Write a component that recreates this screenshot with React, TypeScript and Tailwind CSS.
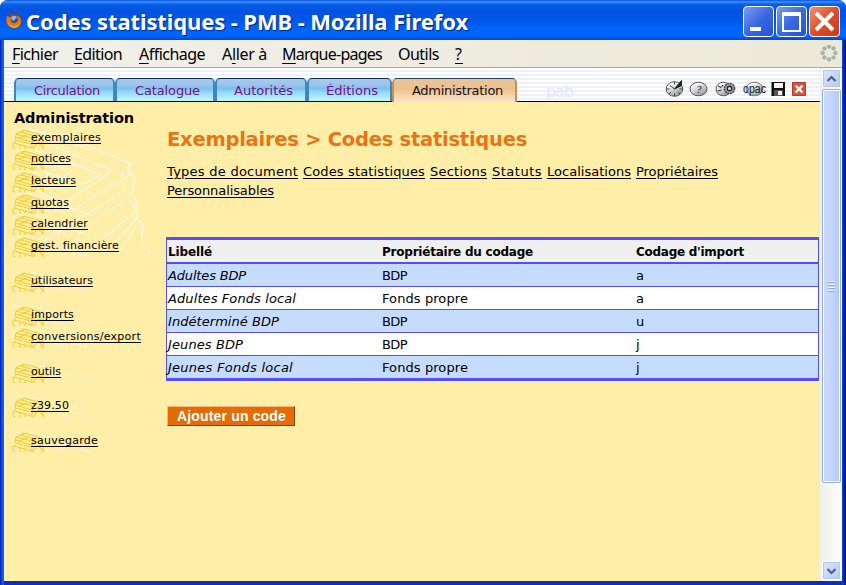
import { useLayoutEffect, useRef, useState } from "react";
import type { ReactNode } from "react";

/** A label whose letters are spaced so that it fills `w` pixels. */
function Label({ w, children, className = "" }: { w: number; children: ReactNode; className?: string }) {
  const ref = useRef<HTMLSpanElement>(null);
  const [spacing, setSpacing] = useState(0);
  useLayoutEffect(() => {
    const el = ref.current;
    if (!el) return;
    el.style.letterSpacing = "0px";
    const n = (el.textContent ?? "").length;
    const s = (w - el.getBoundingClientRect().width) / n;
    el.style.letterSpacing = `${s}px`;
    setSpacing(s);
  }, [w]);
  return (
    <span ref={ref} className={`inline-block whitespace-pre ${className}`} style={{ letterSpacing: `${spacing}px` }}>
      {children}
    </span>
  );
}

const verdana = "font-['DejaVu_Sans',sans-serif]";

function FirefoxIcon() {
  return (
    <svg width="16" height="16" viewBox="0 0 16 16" className="mt-[1px]">
      <circle cx="8" cy="8" r="7.5" fill="#a33b08" />
      <circle cx="8.3" cy="6.7" r="5.2" fill="#2c4f98" />
      <path d="M5 4l2-1.5 3 .5 1 2-2 1-1 2-2-1z" fill="#8fb4d8" />
      <path d="M1 3c1 1 2 .8 3 1.2 1 .2 1.800.5 2 1.300L4.800 7c0 2 1.500 3 3.200 3 2.500 0 4.200-1.500 4-4.500l-1.500-3C14 3.500 15.500 6.500 15 9.500 14 13.500 11 15 8 15 4 15 .500 12 .500 8 .500 6 .500 4.500 1 3z" fill="#e07818" />
      <path d="M2 7c0 4 2 6 6 6.500 3 0 5-1.500 6-4.500-1 5-4 6-6.500 5.500C4 14 1.500 11 2 7z" fill="#ffc43a" />
    </svg>
  );
}

function WinButton({ kind }: { kind: "min" | "max" | "close" }) {
  const close = kind === "close";
  return (
    <div
      className={`h-[31px] w-[31px] rounded-[4px] border border-white bg-gradient-to-br ${
        close ? "from-[#f09070] via-[#df4d29] to-[#c93a12]" : "from-[#7b9df0] via-[#3a68e2] to-[#2453d4]"
      }`}
    >
      <svg width="29" height="29" viewBox="0 0 29 29" fill="none" stroke="#fff">
        {kind === "min" && <path d="M6 22h11" strokeWidth="4" />}
        {kind === "max" && (
          <>
            <path d="M5 7h19" strokeWidth="4" />
            <path d="M6 6v18h17V6" strokeWidth="2" />
          </>
        )}
        {close && <path d="M6 6l17 17M23 6l-17 17" strokeWidth="4" />}
      </svg>
    </div>
  );
}

const menus = [
  { a: "", u: "F", b: "ichier", w: 46, m: "mr-[16px]" },
  { a: "", u: "E", b: "dition", w: 48, m: "mr-[17px]" },
  { a: "", u: "A", b: "ffichage", w: 66, m: "mr-[17px]" },
  { a: "A", u: "l", b: "ler à", w: 45, m: "mr-[15px]" },
  { a: "", u: "M", b: "arque-pages", w: 100, m: "mr-[16px]" },
  { a: "Ou", u: "t", b: "ils", w: 41, m: "mr-[16px]" },
  { a: "", u: "?", b: "", w: 8, m: "" },
];

const tabs = [
  { name: "Circulation", box: "w-[101px] pl-[18px]", w: 66 },
  { name: "Catalogue", box: "w-[100px] pl-[18px]", w: 65 },
  { name: "Autorités", box: "w-[92px] pl-[17px]", w: 59 },
  { name: "Éditions", box: "w-[85px] pl-[17px]", w: 52 },
];

function Throbber() {
  const dots = [0, 1, 2, 3, 4, 5, 6, 7];
  return (
    <svg width="18" height="18" viewBox="0 0 18 18">
      {dots.map((i) => (
        <circle
          key={i}
          cx={9 + 6.4 * Math.cos((i * Math.PI) / 4)}
          cy={8 + 6.4 * Math.sin((i * Math.PI) / 4)}
          r="1.700"
          fill="#b4bdb8"
          stroke="#8d9a94"
          strokeWidth=".7"
        />
      ))}
    </svg>
  );
}

function ToolIcons() {
  return (
    <svg width="142" height="20" viewBox="0 0 142 20" className="shrink-0">
      <defs>
        <linearGradient id="ball" x1="0" y1="0" x2="0.700" y2="1">
          <stop offset="0.200" stopColor="#fff" />
          <stop offset="1" stopColor="#999" />
        </linearGradient>
      </defs>
      <ellipse cx="9.500" cy="11" rx="8.300" ry="7.300" fill="url(#ball)" stroke="#555" />
      <path d="M9.500 11l7-8.500v5z" fill="#222" stroke="#222" />
      <path d="M9.500 11L5 7.500M9.500 4v2.500M9.500 15.500v2.500M1.500 11h3M14.500 11h3M4 16l2-2M13 14l2 2" stroke="#444" />
      <ellipse cx="33.500" cy="11" rx="8.500" ry="6.800" fill="url(#ball)" stroke="#555" />
      <text x="31" y="15" fontSize="11" fontStyle="italic" className="font-['Liberation_Serif',serif]" fill="#111">?</text>
      <ellipse cx="58.500" cy="11" rx="7.500" ry="6.800" fill="url(#ball)" stroke="#555" />
      <path d="M53 8l3 1.500 2-2.500M52.500 13l4-1" stroke="#222" fill="none" />
      <circle cx="64.500" cy="10.500" r="5" fill="#bbb" stroke="#444" strokeWidth="1.600" strokeDasharray="2 .600" />
      <circle cx="64.500" cy="10.500" r="2.300" fill="#ddd" stroke="#222" strokeWidth="1.400" />
      <ellipse cx="89.500" cy="11" rx="8.500" ry="6.800" fill="url(#ball)" stroke="#777" />
      <text x="78" y="15" fontSize="12.500" textLength="23" lengthAdjust="spacingAndGlyphs" className="font-['Liberation_Sans',sans-serif]" fill="#222">opac</text>
      <path d="M106.500 4h13.500v14h-2v-6h-8v6h-3.500z" fill="#111" />
      <path d="M109 5h9v5h-9z" fill="#f8f8f8" />
      <path d="M109 12h9v6h-9z" fill="#555" />
      <path d="M113 13h4v4h-4z" fill="#eee" />
      <path d="M127.500 4.500h13v13h-13z" fill="#de5038" stroke="#b73927" />
      <path d="M130.500 7.500l7 7M137.500 7.500l-7 7" stroke="#fff" strokeWidth="2.400" />
    </svg>
  );
}

function TabBar() {
  return (
    <div className="relative flex h-[34px] shrink-0 items-end border-b border-black bg-[repeating-linear-gradient(to_bottom,#fff_0px,#fff_2px,#eff0fe_2px,#eff0fe_4px)] pl-[10px]">
      {tabs.map((t) => (
        <div
          key={t.name}
          className={`${t.box} flex h-[23px] items-center rounded-t-[5px] border-x-2 border-t border-x-[#3f87bd] border-t-[#102a70] bg-[linear-gradient(to_bottom,#a9cbe8_0px,#98c4e8_7px,#78bff2_9px,#9adcfb_14px,#bdfafd_22px)] pt-[2px] text-[13px] text-[#7b0a8c]`}
        >
          <Label w={t.w}>{t.name}</Label>
        </div>
      ))}
      <div className="-mb-px flex h-[24px] w-[125px] items-center rounded-t-[5px] border-x-2 border-t border-x-[#c09260] border-t-[#16446a] bg-[linear-gradient(to_bottom,#e8c496_0px,#ebc292_8px,#eebd84_10px,#f5d6ae_17px,#fbe1c7_22px)] pl-[18px] pt-px text-[13px] text-[#151018]">
        <Label w={91}>Administration</Label>
      </div>
      <span className="ml-[29px] pb-px text-[16px] leading-none text-[#e3e8f5]">
        <Label w={27}>pab</Label>
      </span>
      <div className="ml-auto flex h-full items-center pr-[13px] pt-[7px]">
        <ToolIcons />
      </div>
    </div>
  );
}

const nav = [
  { t: "exemplaires", w: 70, h: "h-[21px]" },
  { t: "notices", w: 40, h: "h-[22px]" },
  { t: "lecteurs", w: 45, h: "h-[22px]" },
  { t: "quotas", w: 38, h: "h-[21px]" },
  { t: "calendrier", w: 57, h: "h-[22px]" },
  { t: "gest. financière", w: 88, h: "h-[35px]" },
  { t: "utilisateurs", w: 62, h: "h-[34px]" },
  { t: "imports", w: 43, h: "h-[22px]" },
  { t: "conversions/export", w: 110, h: "h-[35px]" },
  { t: "outils", w: 30, h: "h-[34px]" },
  { t: "z39.50", w: 38, h: "h-[35px]" },
  { t: "sauvegarde", w: 67, h: "h-[22px]" },
];

function Books() {
  return (
    <svg width="86" height="22" viewBox="0 0 86 22" fill="none" className="absolute left-0 top-0">
      <g stroke="#fffbe8" strokeDasharray="3 1">
        <path d="M0 4l5-3 10-1 13 3 18 8 34 11M20 5l18 9 17 7M0 9l6-4M0 14l5-3M0 19l5-3" />
      </g>
      <g stroke="#f8cb21">
        <path d="M4 6l8-4 14 4M4 6l16 4 8-4M3 9l17 5 9-4M4 12l15 4M2 15l18 5M1 15v5l2 1M4 6l-1 6M4 12l-2 3M20 10v11M20 14l4-2M10 4l12 4M12 2l-3 3M7 10l8-3M8 17v4M13 18v3M21 21l5-7 5 6M25 15l6-1v7" />
      </g>
    </svg>
  );
}

function Sidebar() {
  return (
    <div className="relative w-[162px] shrink-0 pl-[10px] pt-[7px]">
      <h2 className="h-[19px] text-[14.500px] font-bold leading-[18px] text-black">
        <Label w={120}>Administration</Label>
      </h2>
      <svg width="148" height="130" viewBox="0 0 148 130" fill="none" stroke="#fffbea" strokeWidth="1.300" strokeDasharray="5 1" className="absolute left-[8px] top-[25px]">
        <path d="M18 3l37 7 65 27-5 3 4 8-57 34-37-18M38 18l63 26-51 34M32 45l39 12 17-9-36-16M35 62l25-18M119 43l4 9-4 15 6 8v16l6 6-2 21 9 7-1 8M110 44l2 20-80 50M116 72l9 11-53 45M112 75l-43 25-8 28M125 91l-34 37M125 99l-20 28" />
      </svg>
      <ul className="text-[11px] leading-[19px] text-black">
        {nav.map((n) => (
          <li key={n.t} className={`relative pl-[17px] ${n.h}`}>
            <div className="absolute -left-[2px] top-0">
              <Books />
            </div>
            <a className="relative block border-0">
              <Label w={n.w} className="underline underline-offset-2">{n.t}</Label>
            </a>
          </li>
        ))}
      </ul>
    </div>
  );
}

const links = [
  { t: "Types de document", w: 131 },
  { t: "Codes statistiques", w: 122 },
  { t: "Sections", w: 57 },
  { t: "Statuts", w: 50 },
  { t: "Localisations", w: 84 },
  { t: "Propriétaires", w: 82 },
  { t: "Personnalisables", w: 107 },
];

const rows = [
  { a: "Adultes BDP", aw: 78, b: "BDP", bw: 25, c: "a" },
  { a: "Adultes Fonds local", aw: 128, b: "Fonds propre", bw: 86, c: "a" },
  { a: "Indéterminé BDP", aw: 111, b: "BDP", bw: 25, c: "u" },
  { a: "Jeunes BDP", aw: 75, b: "BDP", bw: 25, c: "j" },
  { a: "Jeunes Fonds local", aw: 125, b: "Fonds propre", bw: 86, c: "j" },
];

const grid = "grid grid-cols-[214px_254px_1fr] items-center pl-px pt-[2px]";

function Main() {
  return (
    <div className="min-w-0 flex-1 pt-[26px]">
      <h1 className="h-[25px] pl-px text-[19.500px] font-bold leading-[24px] text-[#e97416]">
        <Label w={360}>{"Exemplaires > Codes statistiques"}</Label>
      </h1>
      <div className="mt-[9px] flex h-[75px] flex-wrap content-start gap-x-[5px] pl-px text-[13px] leading-[19px] text-black">
        {links.map((l) => (
          <a key={l.t}>
            <Label w={l.w} className="underline underline-offset-2">{l.t}</Label>
          </a>
        ))}
      </div>
      <div className="border-x border-y-[3px] border-t-[#524ff8] border-x-[#524ff8] border-b-[#524ff8] text-black">
        <div className={`${grid} h-[22px] bg-[#efefef] text-[12px] font-bold`}>
          <Label w={44} className="justify-self-start">Libellé</Label>
          <Label w={151} className="justify-self-start">Propriétaire du codage</Label>
          <Label w={108} className="justify-self-start">Codage d'import</Label>
        </div>
        {rows.map((r, i) => (
          <div
            key={r.a}
            className={`${grid} border-[#524ff8] text-[13px] ${i === 0 ? "h-[24px] border-t-2" : "h-[23px] border-t"} ${i % 2 ? "bg-white" : "bg-[#c5dcff]"}`}
          >
            <Label w={r.aw} className="justify-self-start italic">{r.a}</Label>
            <Label w={r.bw} className="justify-self-start">{r.b}</Label>
            <span>{r.c}</span>
          </div>
        ))}
      </div>
      <button className="ml-px mt-[25px] flex h-[20px] w-[128px] items-center border border-b-[#873f00] border-l-[#efb97f] border-r-[#873f00] border-t-[#efb97f] bg-[#e46c03] pl-[9px] pt-px font-['Liberation_Sans',sans-serif] text-[14px] font-bold text-white">
        <Label w={109}>Ajouter un code</Label>
      </button>
    </div>
  );
}

function ArrowButton({ down = false }: { down?: boolean }) {
  return (
    <div className="flex h-[19px] w-[19px] items-center justify-center rounded-[2px] border border-white bg-gradient-to-br from-[#dce6ff] to-[#b5c9f7] outline outline-1 -outline-offset-2 outline-[#b3c7f2]">
      <svg width="11" height="8" viewBox="0 0 11 8" fill="none" stroke="#4d6185" strokeWidth="2.200">
        <path d={down ? "M1.500 2l4 4 4-4" : "M1.500 6l4-4 4 4"} />
      </svg>
    </div>
  );
}

function Scrollbar() {
  return (
    <div className="flex w-[22px] shrink-0 flex-col items-center bg-gradient-to-r from-[#efefeb] to-[#fefefa] pb-px pl-px pt-px">
      <ArrowButton />
      <div className="mt-px flex h-[394px] w-[19px] flex-col items-center justify-center gap-px rounded-[2px] border border-[#91afe0] bg-gradient-to-r from-[#cbd9fd] via-[#c5d4fc] to-[#b2c5f3] shadow-[inset_0_0_0_1px_#fff]">
        {[0, 1, 2, 3].map((i) => (
          <div key={i} className="h-[2px] w-[7px] border-b border-[#8cacf0] bg-[#eef4fe]" />
        ))}
      </div>
      <div className="mt-auto">
        <ArrowButton down />
      </div>
    </div>
  );
}

export default function App() {
  return (
    <div className={`${verdana} h-[585px] w-[846px] overflow-hidden bg-white`}>
      <div className="flex h-full flex-col overflow-hidden rounded-t-[8px] bg-[linear-gradient(to_right,#0019b4_0px,#0855dd_2px,#166aee_4px,#0855dd_842px,#001ea0_844px,#00138c_846px)]">
        <div className="flex h-[40px] shrink-0 items-center bg-[linear-gradient(to_bottom,#0a50dc_0px,#3a93ff_2px,#0a5fe8_4px,#0053df_10px,#0056e8_20px,#0065fc_30px,#0066ff_36px,#0047cf_40px)] pl-[6px] pr-[6px]">
          <FirefoxIcon />
          <div className="ml-[4px] pt-[2px] font-['Noto_Sans',sans-serif] text-[22px] font-bold leading-[30px] text-white [text-shadow:1px_1px_1px_#06248a]">
            <Label w={442}>Codes statistiques - PMB - Mozilla Firefox</Label>
          </div>
          <div className="ml-auto flex gap-[2px] pt-[3px]">
            <WinButton kind="min" />
            <WinButton kind="max" />
            <WinButton kind="close" />
          </div>
        </div>
        <div className="ml-[4px] mr-[4px] flex min-h-0 flex-1 flex-col border-b-4 border-[#0530c0]">
          <div className="flex h-[28px] shrink-0 items-center border-b border-[#aaa99c] bg-gradient-to-r from-[#f1f0e9] to-[#ece9d8] pl-[8px] pr-[4px] font-['Noto_Sans',sans-serif] text-[16px] leading-[24px] text-black">
            {menus.map((m) => (
              <span key={m.u} className={m.m}>
                <Label w={m.w}>
                  {m.a}
                  <span className="underline underline-offset-[3px]">{m.u}</span>
                  {m.b}
                </Label>
              </span>
            ))}
            <div className="ml-auto">
              <Throbber />
            </div>
          </div>
          <div className="flex min-h-0 flex-1">
            <div className="flex min-w-0 flex-1 flex-col bg-[#ffeea7]">
              <TabBar />
              <div className="flex min-h-0 flex-1 pr-px">
                <Sidebar />
                <Main />
              </div>
            </div>
            <Scrollbar />
          </div>
        </div>
      </div>
    </div>
  );
}
